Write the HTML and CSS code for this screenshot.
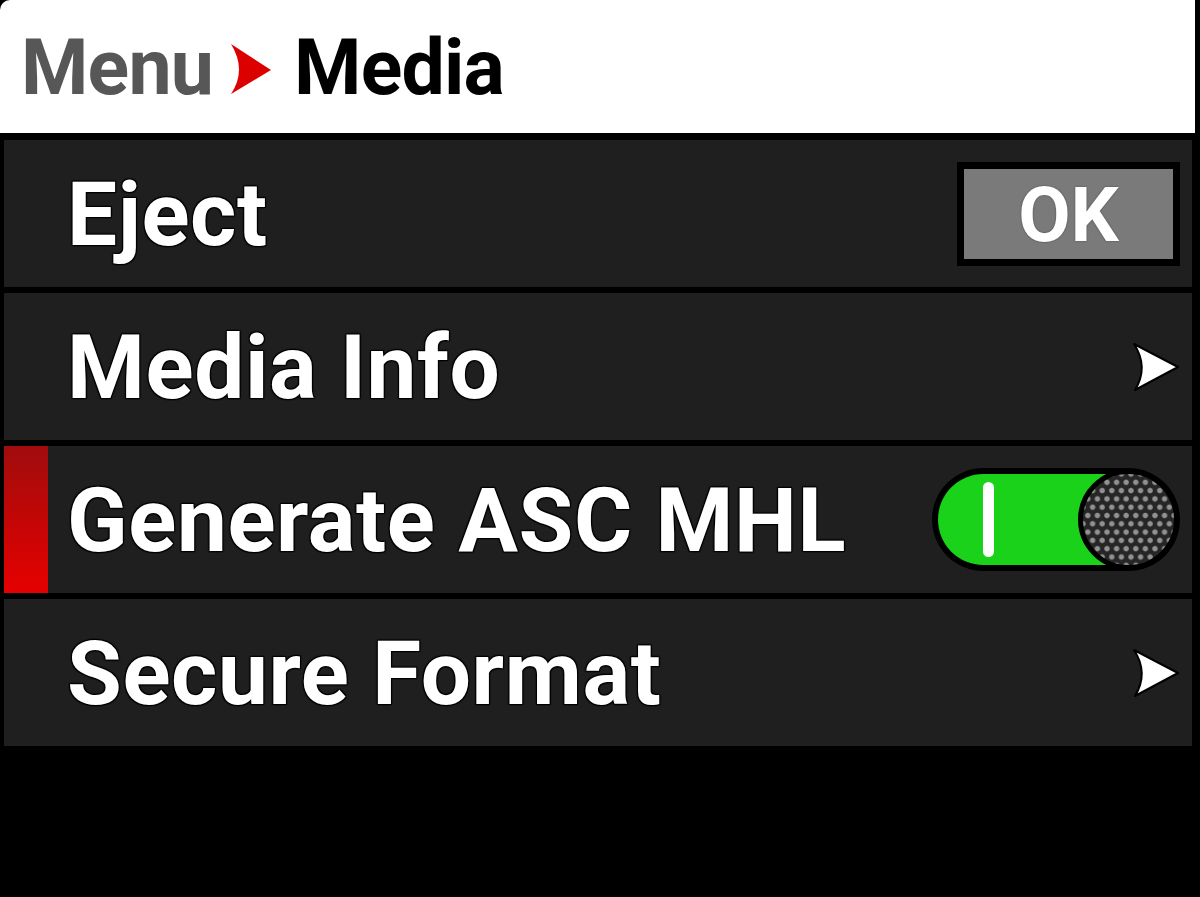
FILE: index.html
```html
<!DOCTYPE html>
<html>
<head>
<meta charset="utf-8">
<link rel="stylesheet" href="styles.css">
</head>
<body>
<div class="screen">
  <header class="crumb">
    <span class="crumb-parent">Menu</span>
    <svg class="crumb-sep" width="42" height="52" viewBox="0 0 42 52"><path d="M1 1 L41 27 L1 51 Q17 27 1 1 Z" fill="#dd0000"/></svg>
    <span class="crumb-current">Media</span>
  </header>
  <ul class="menu">
    <li class="row">
      <span class="label">Eject</span>
      <span class="btn"><span class="btn-face">OK</span></span>
    </li>
    <li class="row">
      <span class="label">Media Info</span>
      <svg class="chev" width="48" height="50" viewBox="0 0 48 50"><path d="M2 2 L46 25 L3 48 Q17 25 2 2 Z" fill="#fff" stroke="#000" stroke-width="2" stroke-linejoin="round"/></svg>
    </li>
    <li class="row selected">
      <span class="label">Generate ASC MHL</span>
      <span class="toggle">
        <span class="track"><span class="on-mark"></span></span>
        <span class="knob"></span>
      </span>
    </li>
    <li class="row">
      <span class="label">Secure Format</span>
      <svg class="chev" width="48" height="50" viewBox="0 0 48 50"><path d="M2 2 L46 25 L3 48 Q17 25 2 2 Z" fill="#fff" stroke="#000" stroke-width="2" stroke-linejoin="round"/></svg>
    </li>
  </ul>
</div>
</body>
</html>
```

FILE: styles.css
```css
html, body {
  margin: 0;
  padding: 0;
  background: #000;
}
body {
  width: 1200px;
  height: 897px;
  overflow: hidden;
  font-family: Roboto, "Liberation Sans", sans-serif;
}
.screen {
  display: flex;
  flex-direction: column;
}
.crumb {
  box-sizing: border-box;
  width: 1195px;
  height: 133px;
  background: #fff;
  border-top-left-radius: 10px;
  display: flex;
  align-items: center;
  padding-left: 21px;
  padding-top: 2px;
  font-weight: 700;
  font-size: 77px;
  letter-spacing: -0.8px;
}
.crumb-parent {
  color: #575757;
}
.crumb-sep {
  margin-left: 17px;
  margin-right: 22px;
  margin-top: 2px;
}
.crumb-current {
  color: #000;
}
.menu {
  list-style: none;
  margin: 7px 0 0 4px;
  padding: 0;
  width: 1188px;
  display: flex;
  flex-direction: column;
  gap: 6px;
}
.row {
  position: relative;
  height: 147px;
  background: #1f1f1f;
  display: flex;
  align-items: center;
  justify-content: space-between;
  padding: 0 12px 0 63px;
}
.row.selected::before {
  content: "";
  position: absolute;
  left: 0;
  top: 0;
  bottom: 0;
  width: 44px;
  background: linear-gradient(#a00c0c, #e60000);
}
.label {
  color: #fff;
  font-weight: 700;
  font-size: 89px;
  letter-spacing: 0.6px;
  margin-top: 2px;
  text-shadow: 0 0 2px #000, 1px 1px 1px #000, -1px -1px 1px #000, 1px -1px 1px #000, -1px 1px 1px #000;
}
.btn {
  box-sizing: border-box;
  width: 223px;
  height: 104px;
  background: #000;
  padding: 7px;
  display: flex;
}
.btn-face {
  flex: 1;
  background: #7a7a7a;
  display: flex;
  align-items: center;
  justify-content: center;
  color: #fff;
  font-weight: 700;
  font-size: 76px;
  padding-top: 2px;
  text-shadow: 0 0 2px #444;
}
.chev {
  display: block;
}
.toggle {
  position: relative;
  box-sizing: border-box;
  width: 248px;
  height: 103px;
  background: #000;
  border-radius: 52px;
  padding: 6px;
  display: flex;
}
.track {
  flex: 1;
  background: #1ad21a;
  border-radius: 46px;
  display: flex;
  align-items: center;
  padding-left: 45px;
}
.on-mark {
  width: 11px;
  height: 75px;
  background: #fff;
  border-radius: 6px;
}
.knob {
  position: absolute;
  right: 1px;
  top: 1px;
  box-sizing: border-box;
  width: 101px;
  height: 101px;
  border-radius: 50%;
  border: 5px solid #000;
  background-color: #262626;
  background-image:
    radial-gradient(circle, #929292 0 2.2px, transparent 3.2px),
    radial-gradient(circle, #929292 0 2.2px, transparent 3.2px);
  background-size: 9.6px 16.6px;
  background-position: 0 0, 4.8px 8.3px;
}
```
